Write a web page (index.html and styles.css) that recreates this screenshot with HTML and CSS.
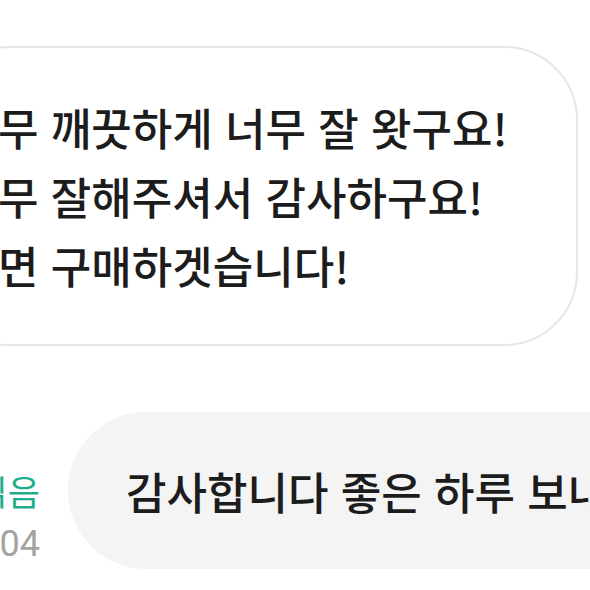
FILE: index.html
```html
<!DOCTYPE html>
<html lang="ko">
<head>
  <meta charset="UTF-8" />
  <meta name="viewport" content="width=device-width, initial-scale=1.0" />
  <title>채팅</title>
  <link rel="stylesheet" href="styles.css">
</head>
<body>
  <div class="chat">
    <div class="row row-top">
      <div class="bubble bubble-white">
        <p>무 깨끗하게 너무 잘 왓구요!</p>
        <p>무 잘해주셔서 감사하구요!</p>
        <p>면 구매하겟습니다!</p>
      </div>
    </div>

    <div class="row row-bottom">
      <div class="meta">
        <span class="read">읽음</span>
        <span class="time">12:04</span>
      </div>
      <div class="bubble bubble-gray">
        <p>감사합니다 좋은 하루 보내세요!</p>
      </div>
    </div>
  </div>
</body>
</html>
```

FILE: styles.css
```css
html, body {
  margin: 0;
  overflow: hidden;
  background: #fff;
}
body {
  font-family: "Noto Sans CJK KR", "Noto Sans", sans-serif;
  color: #1c1c1c;
}
.chat {
  padding-top: 46px;
  display: flex;
  flex-direction: column;
  gap: 66px;
}
.row {
  display: flex;
}
.bubble p {
  margin: 0;
  white-space: nowrap;
  font-size: 44px;
  font-weight: 500;
}
.bubble-white {
  flex: 1;
  margin-left: -64px;
  margin-right: 12px;
  height: 296px;
  box-sizing: content-box;
  padding: 0 0 0 60px;
  border: 2px solid #e6e6e6;
  border-radius: 74px;
  display: flex;
  flex-direction: column;
  justify-content: center;
}
.bubble-white p {
  line-height: 69px;
}
.bubble-gray {
  flex-shrink: 0;
  height: 157px;
  padding: 0 58px;
  background: #f4f4f5;
  border-radius: 78px;
  display: flex;
  align-items: center;
}
.bubble-gray p {
  line-height: 1;
}
.meta {
  flex-shrink: 0;
  width: 40px;
  margin-right: 28px;
  display: flex;
  flex-direction: column;
  align-items: flex-end;
  justify-content: flex-end;
  gap: 3px;
  line-height: 50px;
  white-space: nowrap;
}
.read {
  color: #1eae8c;
  font-size: 35px;
}
.time {
  color: #a3a3a3;
  font-size: 36px;
  font-family: Roboto, "Noto Sans", sans-serif;
}
```
